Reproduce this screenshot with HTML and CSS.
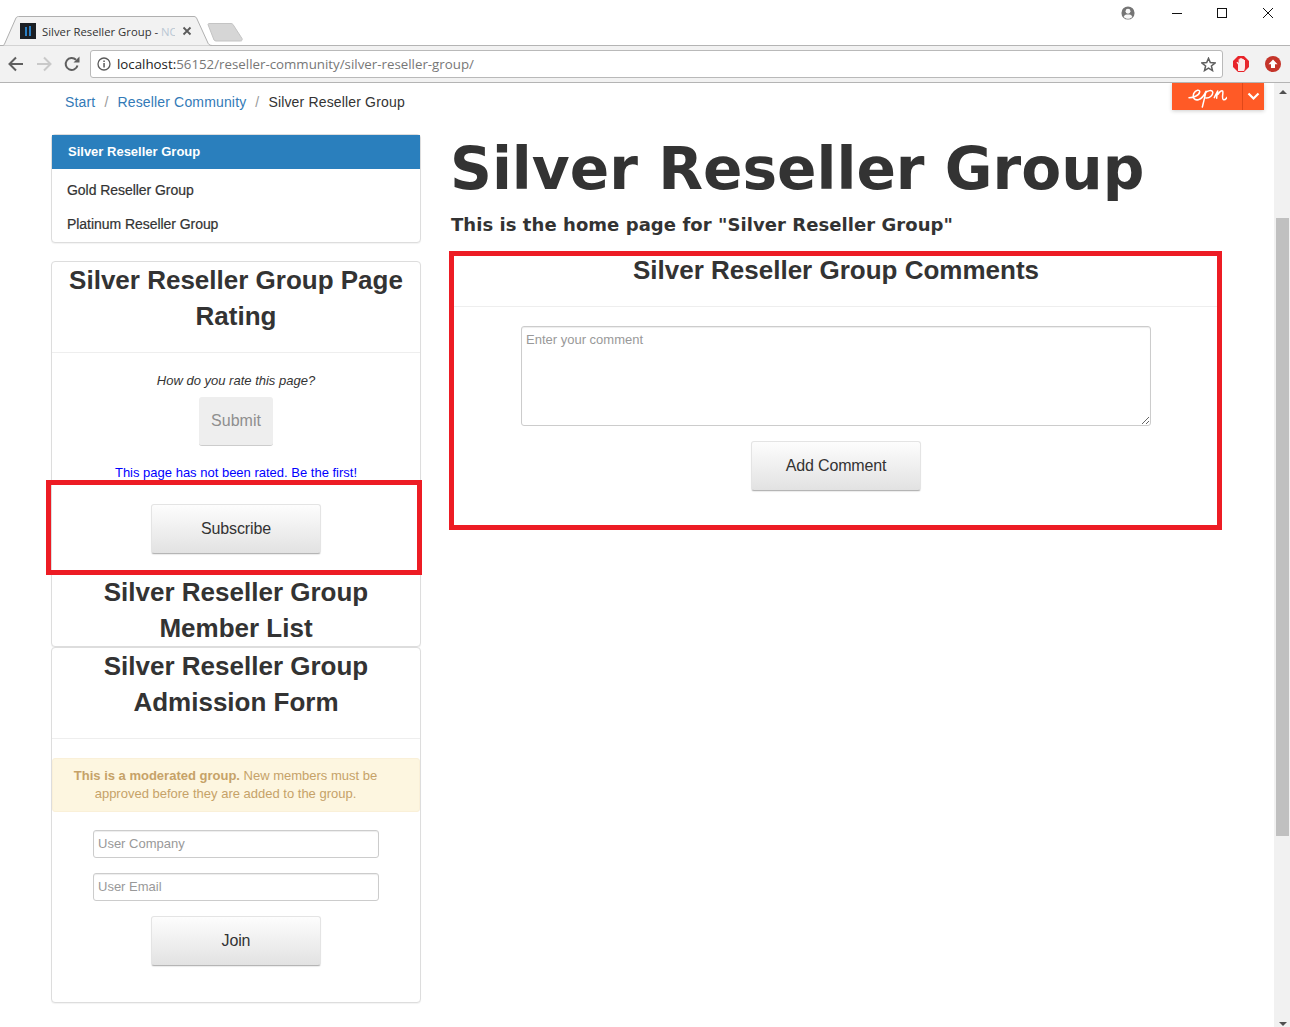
FILE: index.html
```html
<!DOCTYPE html>
<html lang="en">
<head>
<meta charset="utf-8">
<title>Silver Reseller Group</title>
<link rel="stylesheet" href="styles.css">
</head>
<body>
<header class="browser">
  <div class="titlebar">
    <div class="tab">
      <svg class="tab-shape" width="212" height="30" viewBox="0 0 212 30"><path d="M0 29.500H2.500C3.500 29.500 4 29 4.500 28L15.500 3C16 1.500 17 .5 18.500 .5H194C195.500 .5 196.500 1.500 197 3L207.500 26C208 27.500 209 29.500 212 29.500" fill="#f2f2f2" stroke="#b0b0b0"/></svg>
      <svg class="favicon" width="16" height="16" viewBox="0 0 16 16"><rect width="16" height="16" fill="#1b1f24"/><rect x="5" y="4" width="2" height="9" fill="#2a7fc4"/><rect x="9" y="3" width="2" height="10" fill="#2a7fc4"/></svg>
      <span class="tab-title">Silver Reseller Group - <span class="tab-fade">NC</span></span>
      <svg class="tab-close" width="10" height="10" viewBox="0 0 10 10"><path d="M1.500 1.500L8.500 8.500M8.500 1.500L1.500 8.500" stroke="#5a5a5a" stroke-width="1.800"/></svg>
    </div>
    <svg class="newtab" width="36" height="19" viewBox="0 0 36 19"><path d="M1 1.500C1 1 1.500 .5 2 .5H24C25 .5 25.500 1 26 1.500L35 15.500C35.500 17 35 18 33.500 18H9C8 18 7.500 17.500 7 17Z" fill="#d6d6d6" stroke="#c4c4c4"/></svg>
    <div class="window-controls">
      <svg width="14" height="14" viewBox="0 0 16 16"><circle cx="8" cy="8" r="7.500" fill="#757575"/><circle cx="8" cy="6" r="2.800" fill="#f8f8f8"/><path d="M3 12.500C4 10 6 9.800 8 9.800S12 10 13 12.500C11.500 14 10 14.500 8 14.500S4.500 14 3 12.500Z" fill="#f8f8f8"/></svg>
      <svg class="win-min" width="10" height="10" viewBox="0 0 10 10"><path d="M0 5.500H10" stroke="#111"/></svg>
      <svg class="win-max" width="10" height="10" viewBox="0 0 10 10"><rect x=".5" y=".5" width="9" height="9" fill="none" stroke="#111"/></svg>
      <svg class="win-close" width="10" height="10" viewBox="0 0 10 10"><path d="M0 0L10 10M10 0L0 10" stroke="#111"/></svg>
    </div>
  </div>
  <div class="toolbar">
    <svg width="16" height="16" viewBox="0 0 16 16"><path d="M15 8H2M8 1.500L1.500 8L8 14.500" fill="none" stroke="#5f5f5f" stroke-width="2"/></svg>
    <svg class="nav-forward" width="16" height="16" viewBox="0 0 16 16"><path d="M1 8H14M8 1.500L14.500 8L8 14.500" fill="none" stroke="#c9c9c9" stroke-width="2"/></svg>
    <svg class="nav-reload" width="16" height="16" viewBox="0 0 16 16"><path d="M13.500 9.500A6 6 0 1 1 12 3.800" fill="none" stroke="#5f5f5f" stroke-width="2"/><path d="M9.500 6.500H15.500V.5Z" fill="#5f5f5f"/></svg>
    <div class="omnibox">
      <svg width="14" height="14" viewBox="0 0 14 14"><circle cx="7" cy="7" r="6" fill="none" stroke="#5a5a5a" stroke-width="1.300"/><rect x="6.300" y="6" width="1.500" height="4.500" fill="#5a5a5a"/><rect x="6.300" y="3.500" width="1.500" height="1.500" fill="#5a5a5a"/></svg>
      <span class="url"><span class="url-host">localhost:</span>56152/reseller-community/silver-reseller-group/</span>
      <svg class="star" width="15" height="15" viewBox="0 0 15 15"><path d="M7.500 1.300L9.300 5.600L14 6L10.400 9L11.500 13.600L7.500 11.200L3.500 13.600L4.600 9L1 6L5.700 5.600Z" fill="none" stroke="#5f5f5f" stroke-width="1.500"/></svg>
    </div>
    <svg class="ext-stop" width="16" height="16" viewBox="0 0 16 16"><path d="M5 0H11L16 5V11L11 16H5L0 11V5Z" fill="#e8242a"/><path d="M5 15V8.500L3.500 6.500L4.300 5.800L5.600 7V3.200H6.700V2.300H8V2.300H9.300V3H10.800V4H12V10.500C12 13 11.500 14 11 15Z" fill="#fbe9e9"/></svg>
    <svg class="ext-up" width="16" height="16" viewBox="0 0 16 16"><circle cx="8" cy="8" r="8" fill="#c4342a"/><path d="M8 3.500L12.500 8.300H10V12H6V8.300H3.500Z" fill="#fff"/></svg>
  </div>
</header>
<div class="viewport">
  <div class="page">
    <nav class="breadcrumb">
      <a href="#">Start</a><span class="sep">/</span><a href="#">Reseller Community</a><span class="sep">/</span><span>Silver Reseller Group</span>
    </nav>
    <div class="columns">
      <aside class="sidebar">
        <ul class="menu card">
          <li class="menu-active">Silver Reseller Group</li>
          <li>Gold Reseller Group</li>
          <li>Platinum Reseller Group</li>
        </ul>
        <section class="card rating-card">
          <h3 class="card-title rating-title">Silver Reseller Group Page Rating</h3>
          <div class="rating-body">
            <p class="rate-question">How do you rate this page?</p>
            <button class="btn-disabled">Submit</button>
            <p class="rate-note">This page has not been rated. Be the first!</p>
            <button class="btn subscribe">Subscribe</button>
          </div>
          <h3 class="card-title member-title">Silver Reseller Group Member List</h3>
        </section>
        <section class="card admission-card">
          <h3 class="card-title admission-title">Silver Reseller Group Admission Form</h3>
          <div class="alert"><strong>This is a moderated group.</strong> New members must be approved before they are added to the group.</div>
          <form class="join-form">
            <input class="field" placeholder="User Company">
            <input class="field" placeholder="User Email">
            <button type="button" class="btn">Join</button>
          </form>
        </section>
      </aside>
      <main class="content">
        <h1 class="page-title">Silver Reseller Group</h1>
        <h4 class="page-sub">This is the home page for "Silver Reseller Group"</h4>
        <section class="comments">
          <h3 class="card-title comments-title">Silver Reseller Group Comments</h3>
          <div class="comments-body">
            <textarea class="comment-input" placeholder="Enter your comment"></textarea>
            <button class="btn">Add Comment</button>
          </div>
        </section>
      </main>
    </div>
    <div class="epi-bar">
      <span class="epi-logo"><svg class="epi-mark" width="39" height="19" viewBox="57 24 117 57"><path d="M60 50C72 50 90 44 92 33C93 25 80 25 74 38C70 50 76 59 88 56C98 53 106 42 111 31M111 31C108 46 104 62 100 78M109 36C116 28 129 26 131 33C133 42 122 52 111 51M136 50C139 44 142 37 146 30C145 38 143 46 143 52M147 40C151 33 158 27 161 30C164 34 157 52 163 56C167 58 171 54 174 49" fill="none" stroke="#fff" stroke-width="4.500" stroke-linecap="round" stroke-linejoin="round"/></svg></span>
      <span class="epi-toggle"><svg width="13" height="9" viewBox="0 0 13 9"><path d="M1.500 1.500L6.500 6.500L11.500 1.500" fill="none" stroke="#fff" stroke-width="2.200"/></svg></span>
    </div>
    <div class="mark mark-subscribe"></div>
    <div class="mark mark-comments"></div>
  </div>
  <div class="scrollbar">
    <svg class="arrow" width="16" height="17" viewBox="0 0 16 17"><path d="M5 11L9 7L13 11Z" fill="#505050"/></svg>
    <div class="track"><div class="thumb"></div></div>
    <svg class="arrow" width="16" height="17" viewBox="0 0 16 17"><path d="M5 12L9 16L13 12Z" fill="#505050"/></svg>
  </div>
</div>
</body>
</html>
```
FILE: styles.css
```css
* { box-sizing: border-box; }
html, body { margin: 0; height: 100%; overflow: hidden; }
body { width: 1290px; height: 1027px; background: #fff; color: #333; font-family: "Liberation Sans", Arial, sans-serif; font-size: 14px; display: flex; flex-direction: column; }

.browser { height: 83px; flex: none; background: #fff; }
.titlebar { height: 46px; position: relative; display: flex; align-items: flex-end; border-bottom: 1px solid #b4b4b4; }
.tab { width: 212px; height: 30px; margin-bottom: -1px; position: relative; display: flex; align-items: center; padding: 0 0 0 20px; font-family: "Open Sans", "Noto Sans", sans-serif; }
.tab-shape { position: absolute; left: 0; top: 0; }
.favicon { position: relative; flex: none; }
.tab-title { position: relative; margin-left: 6px; width: 133px; overflow: hidden; white-space: nowrap; font-size: 11.300px; color: #333; }
.tab-fade { color: #b9c7d4; }
.tab-close { position: relative; margin-left: 7px; }
.newtab { margin: 0 0 3px -5px; flex: none; }
.window-controls { margin-left: auto; align-self: flex-start; display: flex; align-items: center; height: 26px; padding-right: 17px; }
.win-min { margin-left: 37px; }
.win-max { margin-left: 35px; }
.win-close { margin-left: 36px; }

.toolbar { height: 37px; background: #f2f2f2; border-bottom: 1px solid #b4b4b4; display: flex; align-items: center; padding: 0 9px 0 8px; }
.nav-forward { margin-left: 12px; }
.nav-reload { margin-left: 12px; }
.omnibox { margin-left: 10px; width: 1133px; height: 28px; background: #fff; border: 1px solid #b9b9b9; border-radius: 3px; display: flex; align-items: center; padding: 0 6px; }
.url { margin-left: 6px; font-family: "Open Sans", "Noto Sans", sans-serif; font-size: 13.300px; color: #777; white-space: nowrap; flex: 1; }
.url-host { color: #222; }
.ext-stop { margin-left: 10px; }
.ext-up { margin-left: 16px; }

.viewport { flex: 1; display: flex; min-height: 0; }
.page { flex: 1; position: relative; overflow: hidden; }
.scrollbar { width: 16px; flex: none; background: #f1f1f1; display: flex; flex-direction: column; }
.arrow { flex: none; }
.track { flex: 1; padding-top: 118px; padding-bottom: 174px; display: flex; }
.thumb { flex: 1; background: #c0c0c0; margin: 0 1px 0 2px; }

.breadcrumb { padding: 10px 0 0 65px; height: 51px; line-height: 18px; letter-spacing: .16px; }
.breadcrumb a { color: #337ab7; text-decoration: none; }
.sep { color: #999; padding: 0 9px; }

.columns { display: flex; padding-left: 51px; gap: 30px; }
.sidebar { width: 370px; flex: none; }
.content { width: 770px; flex: none; }

.card { background: #fff; border: 1px solid #ddd; border-radius: 4px; box-shadow: 0 1px 1px rgba(0,0,0,.05); }
.menu { list-style: none; margin: 0 0 18px; padding: 0 0 1px; height: 109px; font-size: 14px; letter-spacing: -.05px; color: #333; }
.menu li { height: 34px; line-height: 34px; padding-left: 15px; -webkit-text-stroke: .2px #333; }
.menu .menu-active { background: #2a7fbd; color: #fff; font-size: 13px; letter-spacing: 0; font-weight: 700; padding-left: 16px; margin-bottom: 4px; -webkit-text-stroke: 0; }

.card-title { margin: 0; font-size: 26px; line-height: 36px; font-weight: 700; text-align: center; color: #333; }
.rating-title { padding: 0 15px 18px; border-bottom: 1px solid #eee; height: 91px; }
.rating-card { height: 386px; }
.rating-body { display: flex; flex-direction: column; align-items: center; padding-top: 19px; }
.rate-question { margin: 0; font-size: 13px; font-style: italic; line-height: 18px; height: 25px; }
.btn-disabled { width: 74px; height: 49px; font: 16px "Liberation Sans", Arial, sans-serif; color: #8f8f8f; background: #eee; border: 0; border-bottom: 1px solid #ccc; border-radius: 3px; padding: 0; }
.rate-note { margin: 18px 0 0; font-size: 13px; line-height: 18px; height: 40px; color: #00f; }
.btn { display: block; width: 170px; height: 50px; font: 16px "Liberation Sans", Arial, sans-serif; letter-spacing: -.15px; color: #333; background: linear-gradient(#fdfdfd, #e2e2e2); border: 1px solid #e4e4e4; border-bottom-color: #b5b5b5; border-radius: 3px; padding: 0; box-shadow: 0 1px 1px rgba(0,0,0,.08); }
.member-title { margin-top: 20px; height: 72px; padding: 0 40px; }

.admission-card { height: 356px; }
.admission-title { padding: 0 40px; height: 91px; border-bottom: 1px solid #eee; }
.alert { margin: 19px 0 0; background: #fdf6e0; border: 1px solid #faf0d8; border-radius: 3px; height: 54px; font-size: 13px; color: #c6a268; line-height: 18px; padding: 8px 35px 0 14px; text-align: center; }
.join-form { display: flex; flex-direction: column; align-items: center; padding-top: 18px; }
.field { width: 286px; height: 28px; margin-bottom: 15px; border: 1px solid #ccc; border-radius: 3px; padding: 0 4px 2px; font: 13px "Liberation Sans", Arial, sans-serif; box-shadow: inset 0 1px 1px rgba(0,0,0,.075); outline: 0; }
.field::placeholder, .comment-input::placeholder { color: #999; opacity: 1; }

.page-title { margin: 0 0 0 -1px; padding-top: 2px; font-family: "DejaVu Sans", Verdana, sans-serif; font-size: 58.200px; line-height: 66px; font-weight: 700; color: #333; }
.page-sub { margin: 12px 0 0; font-family: "DejaVu Sans", Verdana, sans-serif; font-size: 18px; letter-spacing: .06px; line-height: 22px; font-weight: 700; color: #333; }

.comments { margin-top: 16px; height: 279px; }
.comments-title { height: 55px; border-bottom: 1px solid #eee; line-height: 36px; }
.comments-body { display: flex; flex-direction: column; align-items: center; padding-top: 19px; }
.comment-input { display: block; width: 630px; height: 100px; margin-bottom: 15px; border: 1px solid #ccc; border-radius: 3px; padding: 4px 4px; font: 13px/18px "Liberation Sans", Arial, sans-serif; box-shadow: inset 0 1px 1px rgba(0,0,0,.075); outline: 0; }

.epi-bar { position: absolute; left: 1172px; top: 0; width: 92px; height: 27px; background: #ff5a26; display: flex; box-shadow: 0 1px 4px rgba(0,0,0,.2); }
.epi-logo { width: 71px; display: flex; align-items: center; justify-content: center; border-right: 1px solid #e0481a; }
.epi-mark { margin-top: 3px; }
.epi-toggle { flex: 1; display: flex; align-items: center; justify-content: center; }

.mark { position: absolute; border: 5px solid #ed1c24; pointer-events: none; }
.mark-subscribe { left: 46px; top: 397px; width: 376px; height: 95px; }
.mark-comments { left: 449px; top: 168px; width: 773px; height: 279px; }
```
